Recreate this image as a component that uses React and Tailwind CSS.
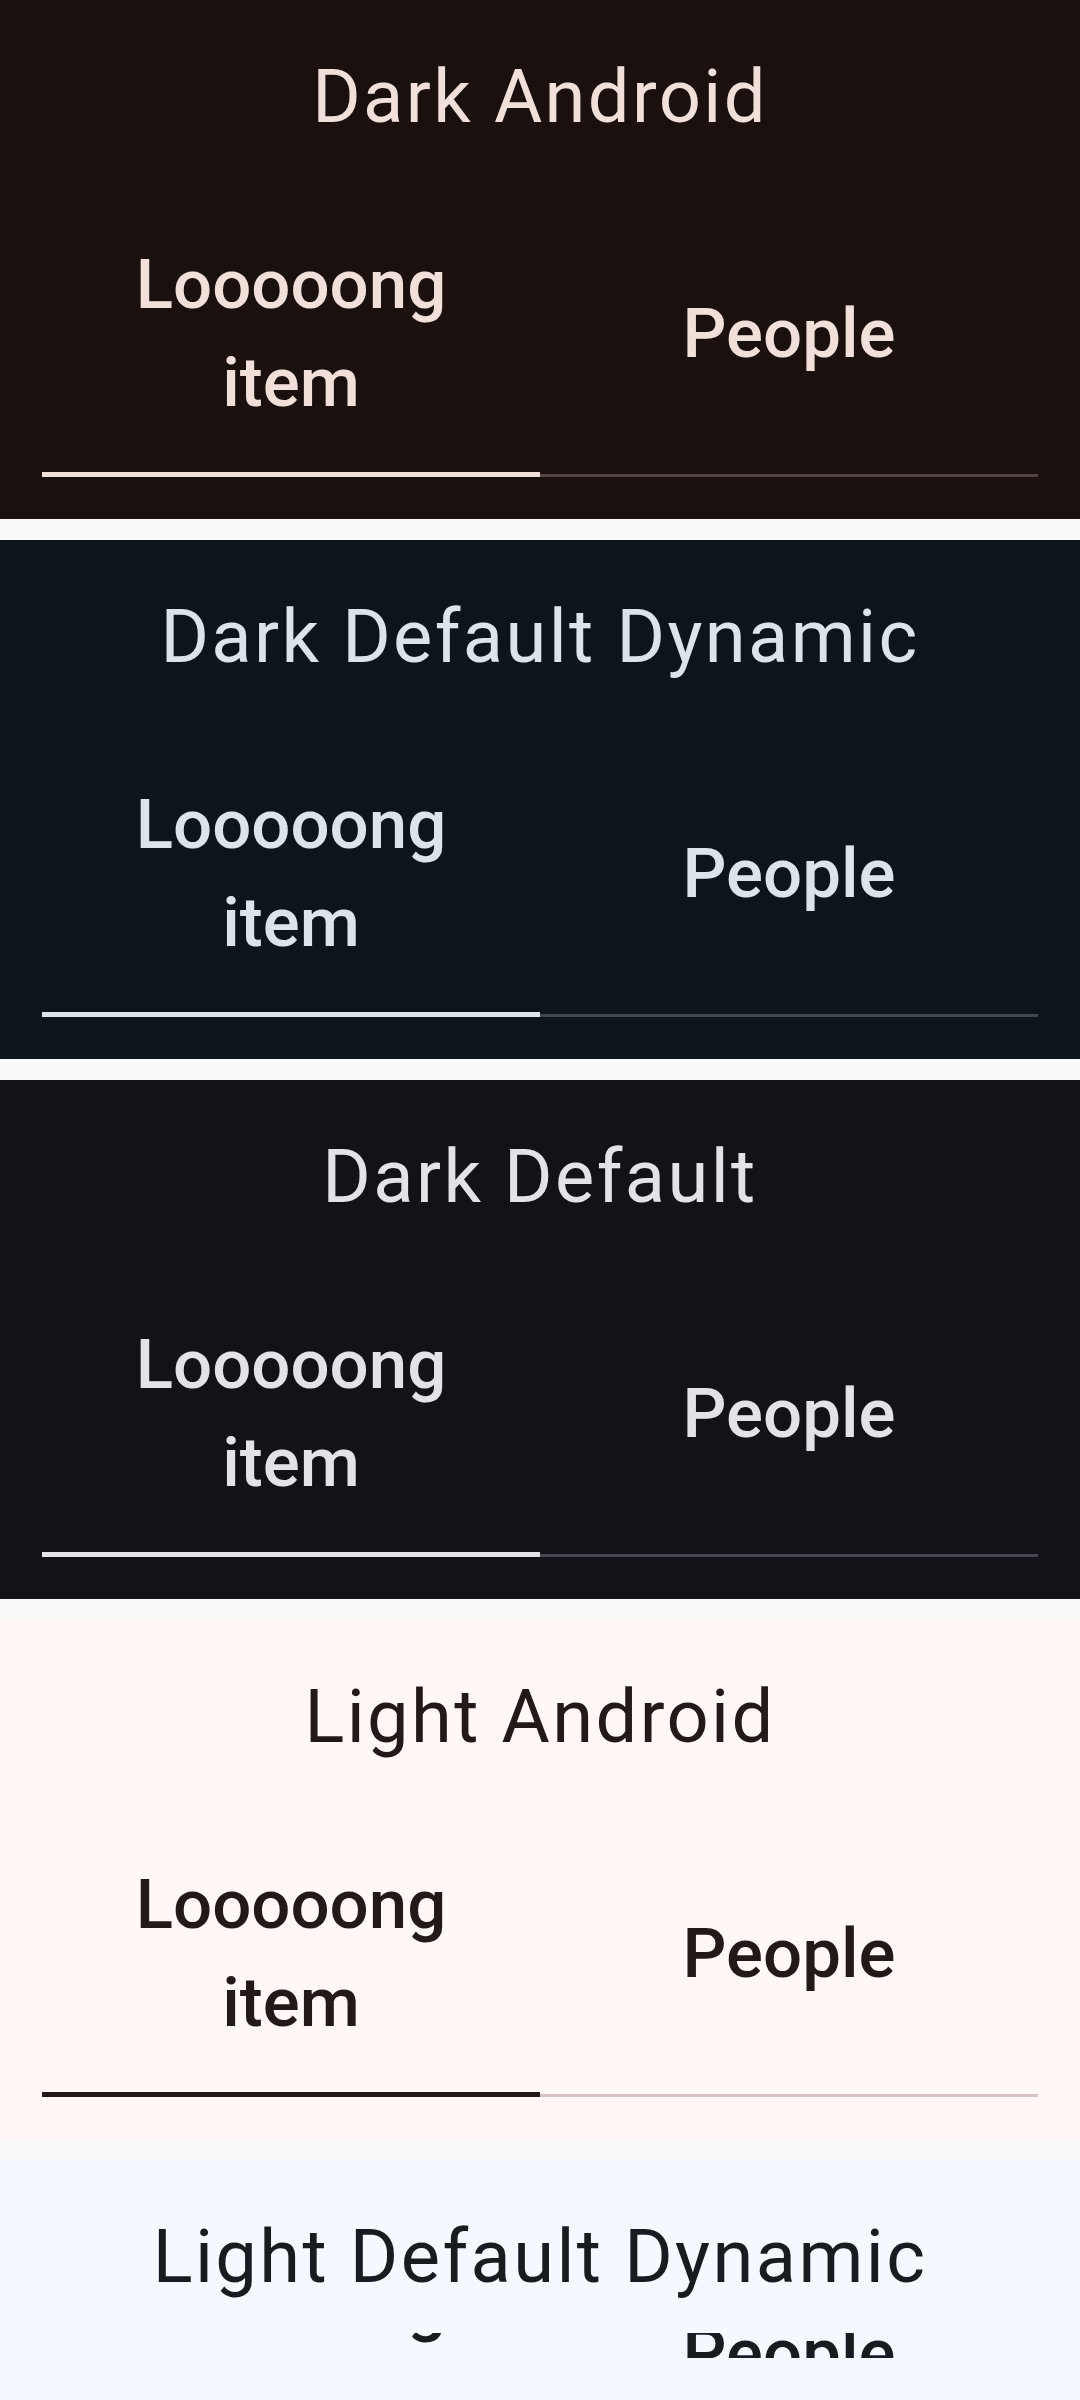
import React from "react";

const themes = [
  { name: "Dark Android", bg: "bg-[#1a110f]", text: "text-[#f1dfda]", bar: "bg-[#f1dfda]", line: "bg-[#534341]" },
  { name: "Dark Default Dynamic", bg: "bg-[#0d141b]", text: "text-[#dde3ea]", bar: "bg-[#dde3ea]", line: "bg-[#41484d]" },
  { name: "Dark Default", bg: "bg-[#121318]", text: "text-[#e3e2e9]", bar: "bg-[#e3e2e9]", line: "bg-[#45464f]" },
  { name: "Light Android", bg: "bg-[#fff8f6]", text: "text-[#231917]", bar: "bg-[#231917]", line: "bg-[#d8c2bf]" },
];

const lastTheme = { name: "Light Default Dynamic", bg: "bg-[#f3f9fe]", text: "text-[#171c20]", bar: "bg-[#171c20]", line: "bg-[#c0c7cd]" };

// Rangée d'onglets : le premier est sélectionné.
function TabRow({ theme }) {
  return (
    <div className="flex">
      <div className="flex flex-1 flex-col">
        <div className="flex h-[276px] items-center justify-center">
          <span className={`text-center text-[69px] font-medium leading-[98px] ${theme.text}`}>
            Looooong
            <br />
            item
          </span>
        </div>
        <div className={`h-[5px] ${theme.bar}`} />
      </div>
      <div className="flex flex-1 flex-col">
        <div className="flex h-[276px] items-center justify-center">
          <span className={`text-center text-[69px] font-medium leading-[98px] ${theme.text}`}>People</span>
        </div>
        <div className="flex h-[5px] flex-col justify-end">
          <div className={`h-[3px] ${theme.line}`} />
        </div>
      </div>
    </div>
  );
}

function Title({ theme }) {
  return (
    <h2 className={`pt-[49px] text-center text-[74px] font-normal leading-[96px] tracking-[2.4px] ${theme.text}`}>
      {theme.name}
    </h2>
  );
}

function Section({ theme }) {
  return (
    <section className={`h-[519px] px-[42px] ${theme.bg}`}>
      <Title theme={theme} />
      <div className="mt-[51px]">
        <TabRow theme={theme} />
      </div>
    </section>
  );
}

export default function App() {
  return (
    <div className="flex h-[2400px] flex-col gap-[21px] overflow-hidden bg-[#fafafa] font-['Roboto',sans-serif]">
      {themes.map((t) => (
        <Section key={t.name} theme={t} />
      ))}
      {/* Dernière section, coupée en bas de l'écran */}
      <section className={`flex-1 px-[42px] ${lastTheme.bg}`}>
        <Title theme={lastTheme} />
        <div className="mt-[28px] h-[25px] overflow-hidden">
          <div className="mt-[-117px]">
            <TabRow theme={lastTheme} />
          </div>
        </div>
      </section>
    </div>
  );
}
